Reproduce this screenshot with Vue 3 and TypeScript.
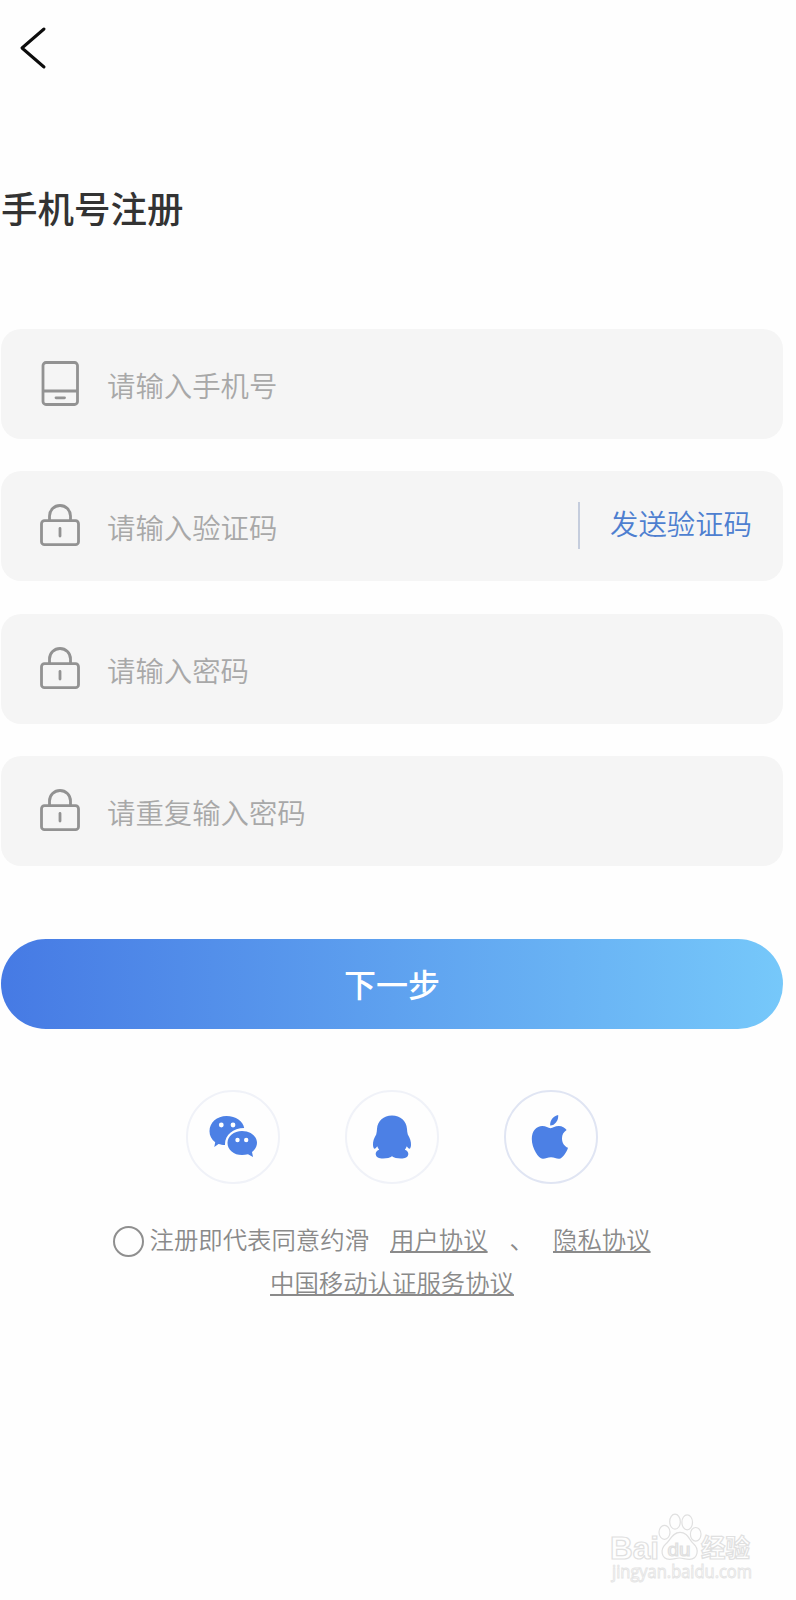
<script setup lang="ts">
interface Field {
  id: string
  icon: 'phone' | 'lock'
  placeholder: string
  code?: boolean
}

const fields: Field[] = [
  { id: 'phone', icon: 'phone', placeholder: '请输入手机号' },
  { id: 'code', icon: 'lock', placeholder: '请输入验证码', code: true },
  { id: 'password', icon: 'lock', placeholder: '请输入密码' },
  { id: 'repeat', icon: 'lock', placeholder: '请重复输入密码' },
]
</script>

<template>
  <main class="page">
    <header class="nav">
      <svg class="back" width="28" height="44" viewBox="0 0 28 44">
        <path d="M25 3 L3 22 L25 41" />
      </svg>
    </header>

    <h1 class="title">手机号注册</h1>

    <form class="fields">
      <label v-for="f in fields" :key="f.id" class="field">
        <svg v-if="f.icon === 'phone'" class="icon" width="42" height="48" viewBox="0 0 42 48">
          <rect x="4" y="2.5" width="34.5" height="42" rx="3" />
          <path d="M4 31 H38.5" />
          <path d="M17 37.8 H25.5" stroke-linecap="round" />
        </svg>
        <svg v-else class="icon" width="42" height="48" viewBox="0 0 42 48">
          <rect x="2.5" y="18.7" width="37" height="24" rx="3" />
          <path d="M10.5 18.5 V14 A10.5 10.5 0 0 1 31.5 14 V18.5" />
          <path d="M21 26.5 V34" stroke-linecap="round" />
        </svg>
        <span class="placeholder">{{ f.placeholder }}</span>
        <span v-if="f.code" class="send"><span class="send-text">发送验证码</span></span>
      </label>
    </form>

    <button class="next" type="button"><span class="next-text">下一步</span></button>

    <div class="social">
      <span class="round">
        <svg width="94" height="94" viewBox="0 0 94 94">
          <path d="M40.5 26 C50 26 57 31 58.2 38 C47 38 39 45 39 54 L39 55 C36.5 55 34.5 54.5 32.5 54 L28.3 57 L29.2 52.3 C25.5 49.5 23.5 45.5 23.5 41.2 C23.5 32.5 31 26 40.5 26 Z" />
          <path d="M56 41 C64.5 41 71 46.3 71 52.8 C71 56.5 69 59.7 66 62 L67 67 L62 64.2 C60 64.8 58 65 56 65 C47.8 65 41.5 59.6 41.5 52.9 C41.5 46.3 47.8 41 56 41 Z" />
          <g fill="#fff">
            <circle cx="35.3" cy="35" r="2.4" /><circle cx="47" cy="35" r="2.4" />
            <circle cx="51.5" cy="50" r="2.2" /><circle cx="60.2" cy="50" r="2.2" />
          </g>
        </svg>
      </span>
      <span class="round">
        <svg width="94" height="94" viewBox="0 0 94 94">
          <path d="M47 25.5 C55.5 25.5 61.5 31 62 39 C62.1 41 62.3 42.5 62.8 44.5 C65 48 66.2 51.5 66 55 C65.9 57 65.3 58.7 64.5 58.7 C63.5 58.7 62.8 57.5 61.8 56.2 C61.3 57.5 60.5 58.8 59.8 59.8 C62.5 60.8 63.5 62.5 63.3 64.3 C63 67.5 60 68.5 56 68.5 C52 68.5 49 67.7 47 66.3 C45 67.7 42 68.5 38 68.5 C34 68.5 31 67.5 30.7 64.3 C30.5 62.5 31.5 60.8 34.2 59.8 C33.5 58.8 32.7 57.5 32.2 56.2 C31.2 57.5 30.5 58.7 29.5 58.7 C28.7 58.7 28.1 57 28 55 C27.8 51.5 29 48 31.2 44.5 C31.7 42.5 31.9 41 32 39 C32.5 31 38.5 25.5 47 25.5 Z" />
        </svg>
      </span>
      <span class="round strong">
        <svg width="94" height="94" viewBox="0 0 94 94">
          <path d="M54.2 25 C54.7 30.5 50.8 35.6 46.2 35.5 C45.6 30.3 49.8 25.7 54.2 25 Z" />
          <path d="M46.5 38.2 C48.8 38.2 51 36 54.8 36 C58.2 36 61 37.8 62.6 40 C59.5 42 58 44.8 58 48.2 C58 52.8 60.3 56.3 64 57.8 C62.8 62 58.5 68.6 55.3 68.8 C52.3 69 50.5 67.3 47 67.3 C43.5 67.3 41.5 69 38.7 68.8 C34.5 68.5 27.8 58.5 27.8 49 C27.8 41 32.5 36 38.3 36 C41.8 36 44.3 38.2 46.5 38.2 Z" />
        </svg>
      </span>
    </div>

    <section class="terms">
      <div class="line">
        <span class="check"></span>
        <span>注册即代表同意约滑</span>
        <a class="user">用户协议</a>
        <span class="comma">、</span>
        <a class="privacy">隐私协议</a>
      </div>
      <div class="line second"><a>中国移动认证服务协议</a></div>
    </section>

    <svg class="watermark" width="160" height="80" viewBox="0 0 160 80">
      <g class="mark">
        <text x="0" y="48.5" font-size="32" font-weight="700" textLength="49" lengthAdjust="spacingAndGlyphs">Bai</text>
        <ellipse cx="54.5" cy="22.3" rx="5.5" ry="7" />
        <ellipse cx="65" cy="11.7" rx="5.3" ry="7.5" />
        <ellipse cx="77.2" cy="12.3" rx="5.3" ry="7.5" />
        <ellipse cx="85.7" cy="24.3" rx="5.3" ry="6.8" />
        <path d="M70 22.3 C78 22.3 79 30 83.5 33.8 C89.5 39 88 49 79.5 49.3 C75 49.3 73 48 69.5 48 C66 48 64 49.3 59.5 49.3 C51 49 50 39.5 55.5 34.3 C60 31 62 22.3 70 22.3 Z" />
        <text x="57.5" y="45.5" font-size="18.5" textLength="23" lengthAdjust="spacingAndGlyphs">du</text>
        <text x="91" y="47" font-size="25" font-weight="700" textLength="49" lengthAdjust="spacingAndGlyphs">经验</text>
      </g>
      <text class="site" x="2" y="67.5" font-size="17.5" textLength="140" lengthAdjust="spacingAndGlyphs">jingyan.baidu.com</text>
    </svg>
  </main>
</template>

<style>
body {
  background: #fefefe;
}
</style>

<style scoped>
.page {
  position: relative;
  box-sizing: border-box;
  width: 796px;
  height: 1600px;
  padding: 0 13px 0 1px;
  overflow: hidden;
  background: #fefefe;
  font-family: 'Noto Sans CJK SC', 'Noto Sans', sans-serif;
}
.nav {
  height: 94px;
  padding: 25.5px 0 0 18px;
  box-sizing: border-box;
}
.back {
  display: block;
  fill: none;
  stroke: #0c0c0c;
  stroke-width: 3;
  stroke-linecap: round;
  stroke-linejoin: round;
}
.title {
  margin: 88px 0 0;
  font-size: 36.5px;
  line-height: 52px;
  font-weight: 500;
  color: #333;
}
.fields {
  display: flex;
  flex-direction: column;
  gap: 32.5px;
  margin-top: 94.5px;
}
.field {
  display: flex;
  align-items: center;
  box-sizing: border-box;
  height: 110px;
  padding: 0 31px 0 37.5px;
  border-radius: 20px;
  background: #f5f5f5;
}
.icon {
  fill: none;
  stroke: #929292;
  stroke-width: 2.8;
}
.placeholder {
  margin: 2px 0 0 26.5px;
  font-size: 28.4px;
  line-height: 40px;
  font-weight: 350;
  color: #a8a8a8;
}
.send {
  display: flex;
  align-items: center;
  height: 47px;
  margin: 0 0 2px auto;
  padding-left: 30px;
  border-left: 2px solid #c5cddd;
  font-size: 28.4px;
  font-weight: 350;
  color: #4e7fd0;
}
.send-text {
  padding-bottom: 5px;
}
.next {
  display: block;
  width: 100%;
  height: 90px;
  margin: 73px 0 0;
  padding: 0;
  border: 0;
  border-radius: 45px;
  background: linear-gradient(90deg, #467ae4, #76c8fa);
  font: 500 32px/88px 'Noto Sans CJK SC', sans-serif;
  color: #fff;
}
.next-text {
  display: block;
  height: 90px;
}
.social {
  display: flex;
  justify-content: center;
  gap: 65px;
  margin-top: 61px;
}
.round {
  box-sizing: border-box;
  display: flex;
  align-items: center;
  justify-content: center;
  width: 94px;
  height: 94px;
  border: 2px solid #f0f2f8;
  border-radius: 50%;
}
.round svg {
  flex: none;
  fill: #4c80e5;
}
.strong {
  border-color: #e0e5f3;
}
.terms {
  margin-top: 33px;
  font-size: 24.4px;
  font-weight: 350;
  line-height: 43px;
  color: #8a8a8a;
}
.line {
  display: flex;
  align-items: center;
  height: 43px;
  padding-left: 111.5px;
}
.check {
  box-sizing: border-box;
  width: 31px;
  height: 31px;
  margin: 6px 6px 0 0;
  border: 2px solid #8f8f8f;
  border-radius: 50%;
}
.terms a {
  text-decoration: underline;
  text-decoration-thickness: 1.5px;
  text-underline-offset: 2px;
}
.user {
  margin-left: 21px;
}
.comma {
  margin-left: 22px;
}
.privacy {
  margin-left: 19px;
}
.second {
  justify-content: center;
  padding: 0;
}
.watermark {
  position: absolute;
  left: 610px;
  top: 1510px;
  font-family: 'Liberation Sans', 'Noto Sans CJK SC', sans-serif;
}
.mark {
  fill: #fefefe;
  stroke: #e0e0e0;
  stroke-width: 1.2;
}
.site {
  fill: #fefefe;
  stroke: #e4e4e4;
  stroke-width: 0.9;
  font-family: 'Open Sans', sans-serif;
}
</style>
